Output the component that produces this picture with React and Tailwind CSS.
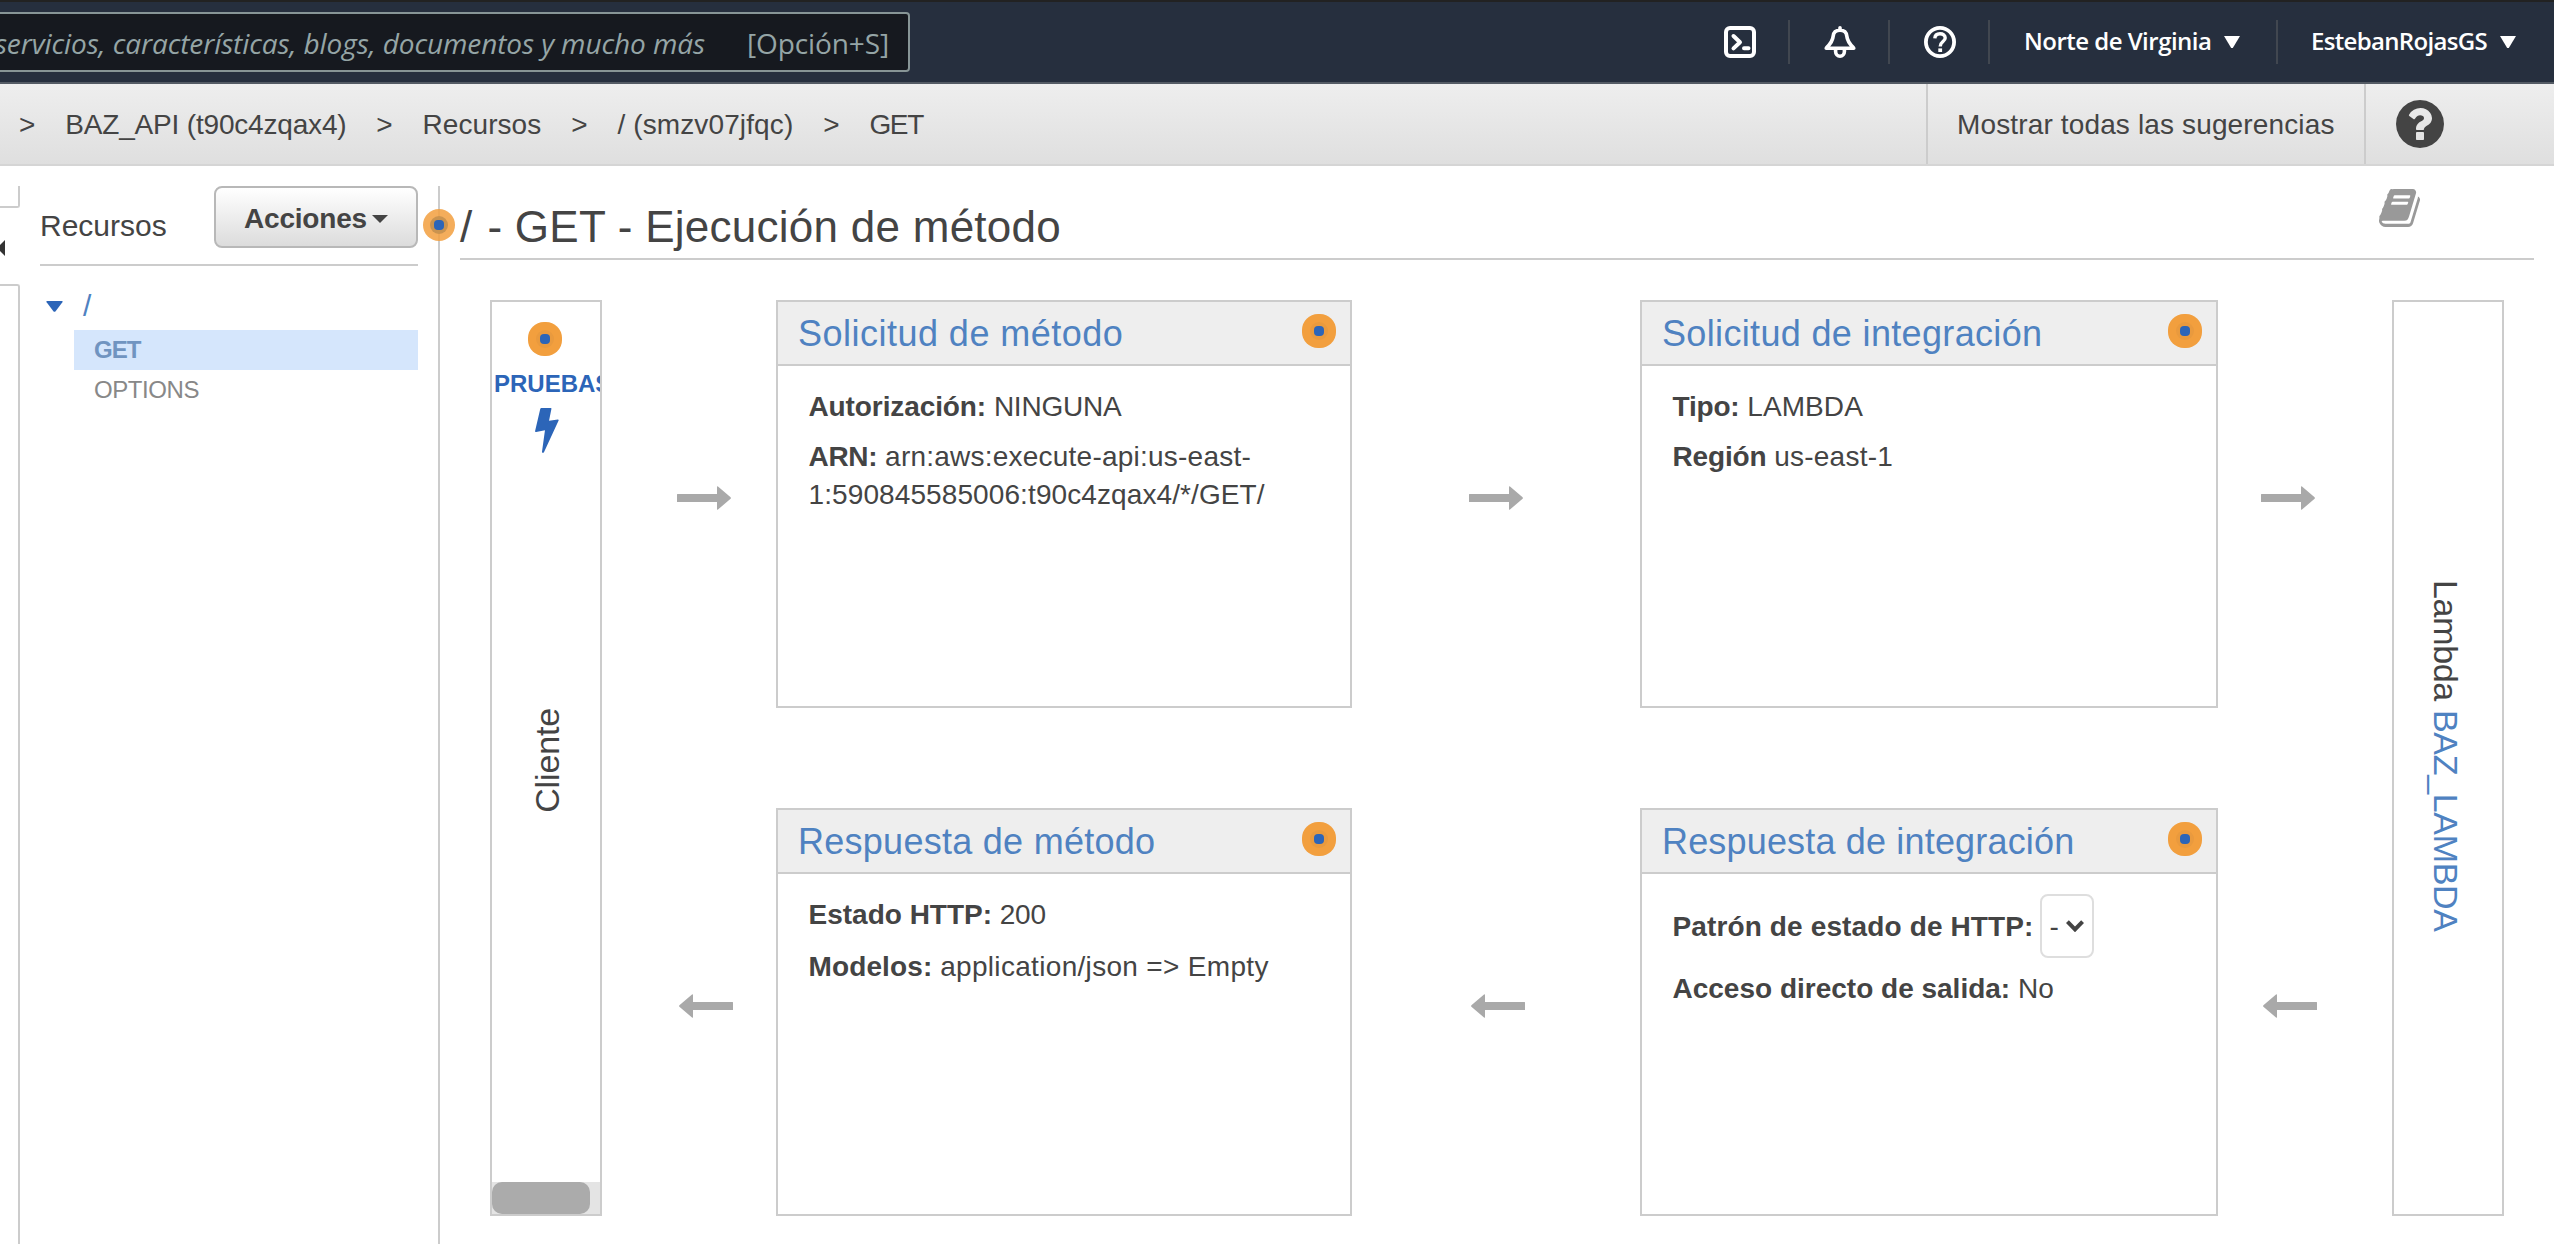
import React from "react";

function Dot({ className = "" }) {
  return (
    <span className={"flex h-[34px] w-[34px] shrink-0 items-center justify-center rounded-[16px] bg-[#f29f3e] " + className}>
      <span className="flex h-[18px] w-[18px] items-center justify-center rounded-full bg-[#e99a3e]">
        <span className="h-[10px] w-[10px] rounded-[4px] bg-[#2c65b8]" />
      </span>
    </span>
  );
}

function Arrow({ flip = false, className = "" }) {
  return (
    <div className={"flex items-center pb-[12px] " + className}>
      <svg width="54" height="24" viewBox="0 0 54 24" fill="#a9a9a9" className={flip ? "ml-[2px] shrink-0 -scale-x-100" : "shrink-0"}>
        <path d="M0.5 8H40V0.8Q40 0 41 0.6L53.6 11.2Q54.2 12 53.6 12.8L41 23.4Q40 24 40 23.2V16H0.5Q0 16 0 15.5V8.5Q0 8 0.5 8Z" />
      </svg>
    </div>
  );
}

function Card({ title, spacing, children }) {
  return (
    <section className="flex flex-col border-2 border-[#ccc] bg-white">
      <header className="flex h-[64px] shrink-0 items-center justify-between border-b-2 border-[#ccc] bg-[#eee] pr-[14px] pl-[20px]">
        <h2 className={"pt-[2px] text-[36px] leading-[60px] text-[#4f82c1] " + spacing}>{title}</h2>
        <Dot className="mb-[4px]" />
      </header>
      <div className="pr-[20px] pl-[30.5px] text-[28px] leading-[38px]">{children}</div>
    </section>
  );
}

function TopBar() {
  return (
    <div className="flex h-[84px] justify-between border-t-2 border-b-2 border-t-[#222] border-b-[#545b64] bg-[#262f3e] font-['Open_Sans','Noto_Sans',sans-serif]">
      <div className="mt-[10px] flex h-[60px] w-[910px] items-center justify-end gap-[42px] overflow-hidden rounded-r-[4px] border-2 border-l-0 border-[#879596] bg-[#16191f] pt-[2px] pr-[19px] text-[28px] leading-[54px] whitespace-nowrap text-[#95a5a6]">
        <span className="tracking-[-0.1px] italic">servicios, características, blogs, documentos y mucho más</span>
        <span className="tracking-[-0.1px]">[Opción+S]</span>
      </div>
      <nav className="mt-[18px] flex h-[44px] text-[24px] leading-[42px] font-semibold text-white">
        <div className="flex w-[100px] items-start justify-center border-r-2 border-[#414750] pt-[6px] pl-[2px]">
          <svg width="32" height="32" viewBox="0 0 32 32" fill="none" stroke="#fff" strokeWidth="4" strokeLinecap="round" strokeLinejoin="round">
            <rect x="2" y="2" width="28" height="28" rx="4" />
            <path d="M9.5 10L16 16.2L9.5 22.4M20 22.2H24.5" />
          </svg>
        </div>
        <div className="flex w-[100px] items-start justify-center border-r-2 border-[#414750] pt-[6px] pl-[2px]">
          <svg width="32" height="32" viewBox="0 0 32 32" fill="none" stroke="#fff" strokeWidth="3.6" strokeLinecap="round" strokeLinejoin="round">
            <path d="M16 1.8V4M2.2 22.2H29.8M2.6 21.6C7.2 17.2 8.8 14.5 9.2 10C9.6 6 12 4.2 16 4.2S22.4 6 22.8 10C23.2 14.5 24.8 17.2 29.4 21.6M11.6 23V25.4A4.4 4.8 0 0 0 20.4 25.4V23" />
          </svg>
        </div>
        <div className="flex w-[100px] items-start justify-center border-r-2 border-[#414750] pt-[6px] pl-[2px]">
          <svg width="32" height="32" viewBox="0 0 32 32" fill="none" stroke="#fff" strokeWidth="3.8">
            <circle cx="16" cy="16" r="14.1" />
            <path d="M10.8 12.4C11 9.2 13 7.8 16 7.8S21.2 9.4 21.2 12C21.2 15.6 16.2 15.6 16.2 20.4" strokeWidth="3.4" />
            <path d="M16.2 22.4V26" />
          </svg>
        </div>
        <div className="flex w-[288px] justify-between border-r-2 border-[#414750] pr-[36px] pl-[34px]">
          <span className="tracking-[-0.52px]">Norte de Virginia</span>
          <svg width="16" height="12" viewBox="0 0 16 12" fill="#fff" className="mt-[16px]"><path d="M0 0H16L8.8 12H7.2Z" /></svg>
        </div>
        <div className="flex w-[238px] justify-between pl-[33px]">
          <span className="tracking-[-0.67px]">EstebanRojasGS</span>
          <svg width="16" height="12" viewBox="0 0 16 12" fill="#fff" className="mt-[16px]"><path d="M0 0H16L8.8 12H7.2Z" /></svg>
        </div>
        <div className="w-[38px]" />
      </nav>
    </div>
  );
}

function Breadcrumbs() {
  return (
    <div className="flex h-[82px] justify-between border-b-2 border-[#d5d5d5] bg-linear-to-b from-[#eee] to-[#dfdfdf] text-[28px] leading-[82px] whitespace-nowrap">
      <div className="flex gap-[29.9px] pl-[19px]">
        <span>&gt;</span>
        <span className="tracking-[-0.18px]">BAZ_API (t90c4zqax4)</span>
        <span>&gt;</span>
        <span className="tracking-[0.05px]">Recursos</span>
        <span>&gt;</span>
        <span className="tracking-[0.12px]">/ (smzv07jfqc)</span>
        <span>&gt;</span>
        <span className="tracking-[-1.4px]">GET</span>
      </div>
      <div className="flex h-[80px]">
        <div className="w-[440px] border-x-2 border-[#ccc] pl-[29px] tracking-[0.14px]">Mostrar todas las sugerencias</div>
        <div className="w-[188px] pt-[16px] pl-[30px]">
          <svg width="48" height="48" viewBox="128 128 1536 1536" fill="#444">
            <path d="M1024 1376v-192q0-14-9-23t-23-9h-192q-14 0-23 9t-9 23v192q0 14 9 23t23 9h192q14 0 23-9t9-23zm256-672q0-88-55.5-163t-138.5-116-170-41q-243 0-371 213-15 24 8 42l132 100q7 6 19 6 16 0 25-12 53-68 86-92 34-24 86-24 48 0 85.5 26t37.5 59q0 38-20 61t-68 45q-63 28-115.5 86.5t-52.5 125.5v36q0 14 9 23t23 9h192q14 0 23-9t9-23q0-19 21.5-49.5t54.5-49.5q32-18 49-28.5t46-35 44.5-48 28-60.5 12.5-81zm384 192q0 209-103 385.5t-279.5 279.5-385.5 103-385.5-103-279.5-279.5-103-385.5 103-385.5 279.5-279.5 385.5-103 385.5 103 279.5 279.5 103 385.5z" />
          </svg>
        </div>
      </div>
    </div>
  );
}

function Sidebar() {
  return (
    <aside className="relative w-[420px] shrink-0 border-r-2 border-[#ccc] pr-[20px] pl-[20px]">
      <div className="flex h-[80px] justify-between border-b-2 border-[#ccc]">
        <h2 className="text-[30px] leading-[79px]">Recursos</h2>
        <button className="flex h-[62px] w-[204px] items-center rounded-[8px] border-2 border-[#b8b8b8] bg-linear-to-b from-white to-[#dcdcdc] pl-[28px] text-[28px] leading-[58px] font-bold">
          <span className="mt-[4px] tracking-[-0.2px]">Acciones</span>
          <svg width="16" height="8" viewBox="0 0 16 8" fill="#444" className="mt-[4px] ml-[5px]"><path d="M0 0H16L8 8Z" /></svg>
        </button>
      </div>
      <div className="mt-[18px] flex h-[44px] items-center pl-[6px] text-[30px] text-[#4f82c1]">
        <svg width="17" height="11" viewBox="0 0 17 11" fill="#2c65b8"><path d="M1 0H16Q17.2 0 16.4 1.2L9.6 10.2Q8.5 11.4 7.4 10.2L0.6 1.2Q-0.2 0 1 0Z" /></svg>
        <span className="ml-[20px] leading-[42px]">/</span>
      </div>
      <div className="mt-[2px] ml-[34px] bg-[#d5e6fc] pl-[20px] text-[24px] leading-[40px] font-bold tracking-[-1px] text-[#7094c0]">GET</div>
      <div className="ml-[34px] pl-[20px] text-[24px] leading-[40px] tracking-[-0.42px] text-[#888]">OPTIONS</div>
      <span className="absolute top-[23px] -right-[17px] flex h-[32px] w-[32px] items-center justify-center rounded-full bg-[#f29f3e]/85">
        <span className="flex h-[18px] w-[18px] items-center justify-center rounded-full bg-[#ca934f]">
          <span className="h-[10px] w-[10px] rounded-[4px] bg-[#2c65b8]" />
        </span>
      </span>
    </aside>
  );
}

export default function App() {
  return (
    <div className="flex h-[1244px] w-[2554px] flex-col overflow-hidden bg-white font-['Liberation_Sans',Arial,sans-serif] text-[#444]">
      <TopBar />
      <Breadcrumbs />
      <div className="flex flex-1 pt-[20px]">
        <div className="flex w-[20px] shrink-0 flex-col">
          <div className="h-[22px] rounded-br-[3px] border-r-2 border-b-2 border-[#ccc]" />
          <div className="h-[76px] pt-[32px]">
            <svg width="5" height="16" viewBox="0 0 5 16" fill="#333"><path d="M5 0V16L0 11V5Z" /></svg>
          </div>
          <div className="flex-1 rounded-tr-[3px] border-t-2 border-r-2 border-[#ccc]" />
        </div>
        <Sidebar />
        <main className="flex-1 pr-[20px] pl-[20px]">
          <div className="flex h-[74px] items-start justify-between border-b-2 border-[#ccc]">
            <h1 className="pt-[10px] text-[44px] leading-[62px] tracking-[0.26px]"><span className="tracking-[1.5px]">/ </span>- GET - Ejecución de método</h1>
            <svg width="41" height="38" viewBox="64 128 1664 1536" preserveAspectRatio="none" fill="#999" className="mt-[3px] mr-[114px]">
              <path d="M1703 478q40 57 18 129l-275 906q-19 64-76.5 107.5t-122.5 43.5h-923q-77 0-148.500-53.500t-99.500-131.500q-24-67-2-127 0-4 3-27t4-37q1-8-3-21.500t-3-19.500q2-11 8-21t16.500-23.500 16.500-23.500q23-38 45-91.500t30-91.500q3-10 .5-30t-.5-28q3-11 17-28t17-23q21-36 42-92t25-90q1-9-2.500-32t.5-28q4-13 22-30.500t22-22.500q19-26 42.500-84.500t27.500-96.500q1-8-3-25.500t-2-26.500q2-8 9-18t18-23 17-21q8-12 16.500-30.500t15-35 16-36 19.500-32 26.500-23.500 36-11.500 47.500 5.500l-1 3q38-9 51-9h761q74 0 114 56t18 130l-274 906q-36 119-71.500 153.500t-128.500 34.500h-869q-27 0-38 15-11 16-1 43 24 70 144 70h923q29 0 56-15.500t35-41.500l300-987q7-22 5-57 38 15 59 43zm-1064 2q-4 13 2 22.500t20 9.500h608q13 0 25.500-9.500t16.500-22.500l21-64q4-13-2-22.500t-20-9.500h-608q-13 0-25.500 9.500t-16.500 22.500zm-83 256q-4 13 2 22.500t20 9.500h608q13 0 25.500-9.500t16.500-22.500l21-64q4-13-2-22.500t-20-9.500h-608q-13 0-25.500 9.500t-16.500 22.500z" />
            </svg>
          </div>
          <div className="mt-[40px] ml-[30px] flex h-[916px] w-[2014px]">
            <div className="flex w-[112px] shrink-0 flex-col overflow-hidden border-2 border-[#ccc] pt-[20px]">
              <Dot className="ml-[36px]" />
              <span className="mt-[8px] ml-[2px] text-[24px] leading-[40px] font-bold whitespace-nowrap text-[#2c65b8]">PRUEBAS</span>
              <svg width="24" height="45" viewBox="0 0 70 133" fill="#2c65b8" className="mt-[4px] ml-[43px] shrink-0">
                <path d="M18 0H46Q49 0 48 3L41 38L67 34Q71 34 69 38L26 131Q23 134 20 131L29 66L3 71Q-1 71 0 67L15 3Q16 0 18 0Z" />
              </svg>
              <span className="mt-[255px] ml-[36px] w-[38px] rotate-180 self-start text-[34px] leading-[38px] tracking-[-0.15px] [writing-mode:vertical-rl]">Cliente</span>
              <div className="mt-auto h-[32px] bg-[#e4e4e4]">
                <div className="h-[32px] w-[98px] rounded-[10px] bg-[#ababab]" />
              </div>
            </div>
            <div className="grid shrink-0 grid-cols-[174px_576px_288px_578px_174px] grid-rows-[408px_408px] gap-y-[100px]">
              <Arrow className="pl-[75px]" />
              <Card title="Solicitud de método" spacing="tracking-[0.48px]">
                <p className="mt-[22px]"><b className="tracking-[-0.1px]">Autorización:</b> <span className="tracking-[-0.24px]">NINGUNA</span></p>
                <p className="mt-[12px]"><b className="tracking-[-0.3px]">ARN:</b> <span className="tracking-[0.23px]">arn:aws:execute-api:us-east-</span><br /><span className="tracking-[0.1px]">1:590845585006:t90c4zqax4/*/GET/</span></p>
              </Card>
              <Arrow className="pl-[117px]" />
              <Card title="Solicitud de integración" spacing="tracking-[0.34px]">
                <p className="mt-[22px]"><b className="tracking-[-0.2px]">Tipo:</b> <span className="tracking-[0.1px]">LAMBDA</span></p>
                <p className="mt-[12px]"><b className="tracking-[-0.16px]">Región</b> <span className="tracking-[0.23px]">us-east-1</span></p>
              </Card>
              <Arrow className="pl-[43px]" />
              <Arrow flip className="pl-[75px]" />
              <Card title="Respuesta de método" spacing="tracking-[0.27px]">
                <p className="mt-[22px]"><b>Estado HTTP:</b> <span className="tracking-[-0.3px]">200</span></p>
                <p className="mt-[14px]"><b className="tracking-[0.12px]">Modelos:</b> <span className="tracking-[0.32px]">application/json =&gt; Empty</span></p>
              </Card>
              <Arrow flip className="pl-[117px]" />
              <Card title="Respuesta de integración" spacing="tracking-[0.17px]">
                <div className="mt-[20px] flex h-[64px] items-center">
                  <b className="mt-[2px] tracking-[0.13px]">Patrón de estado de HTTP:</b>
                  <div className="ml-[6px] flex h-[64px] w-[54px] items-center rounded-[8px] border-2 border-[#dedede] pl-[8px]">
                    <span className="mt-[2px]">-</span>
                    <svg width="18" height="12" viewBox="0 0 18 12" fill="none" stroke="#444" strokeWidth="4" className="ml-[7px]"><path d="M1.4 1.6L9 9.4L16.600 1.600" /></svg>
                  </div>
                </div>
                <p className="mt-[12px]"><b>Acceso directo de salida:</b> No</p>
              </Card>
              <Arrow flip className="pl-[43px]" />
            </div>
            <div className="flex w-[112px] shrink-0 items-center justify-center border-2 border-[#ccc] pr-[5px] pb-[5px]">
              <span className="text-[34px] leading-[38px] tracking-[-0.33px] whitespace-nowrap [writing-mode:vertical-rl]">Lambda <span className="text-[#4f82c1]">BAZ_LAMBDA</span></span>
            </div>
          </div>
        </main>
      </div>
    </div>
  );
}
